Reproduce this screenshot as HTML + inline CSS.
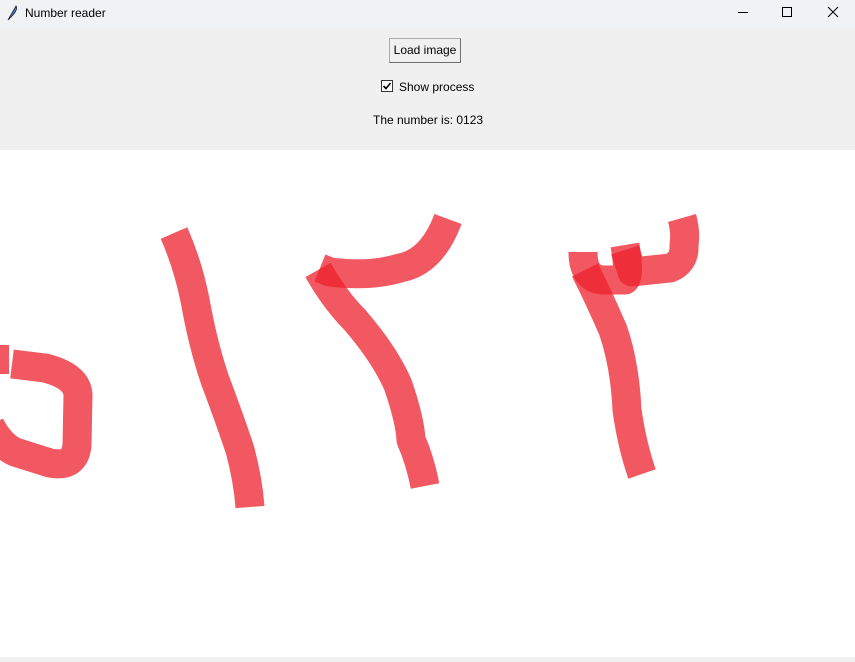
<!DOCTYPE html>
<html><head><style>
body{margin:0;width:855px;height:662px;overflow:hidden;background:#f0f0f0;font-family:"Liberation Sans",sans-serif;font-size:12px;position:relative}
.title{position:absolute;left:0;top:0;width:855px;height:28px;background:#f1f2f4}
.title span{position:absolute;left:25px;top:6px;font-size:12px;color:#000}
.btn{position:absolute;left:389px;top:38px;width:72px;height:25px;box-sizing:border-box;border:1px solid #adadad;border-right-color:#6f6f6f;border-bottom-color:#6f6f6f;background:#f0f0f0;text-align:center;line-height:23px;font-size:12px}
.chk{position:absolute;left:381px;top:80px;width:12px;height:12px;border:1px solid #333;background:#fff;box-sizing:border-box}
.lbl{position:absolute;font-size:12px;color:#000}
.canvas{position:absolute;left:0;top:150px;width:855px;height:507px;background:#fff}
</style></head><body>
<div class="title">
<svg style="position:absolute;left:6px;top:5px" width="12" height="16" viewBox="0 0 12 16"><path d="M2 15 L10 1 Q12 4 7 10 L3 14 Z" fill="#5b7fc7" stroke="#123" stroke-width="0.8"/></svg>
<span>Number reader</span>
<svg style="position:absolute;left:730px;top:6px" width="120" height="14" viewBox="0 0 120 14">
<line x1="8" y1="6.5" x2="18" y2="6.5" stroke="#000" stroke-width="1"/>
<rect x="52.5" y="1.5" width="9" height="9" fill="none" stroke="#000" stroke-width="1"/>
<path d="M98 1 L108 11 M108 1 L98 11" stroke="#000" stroke-width="1"/>
</svg>
</div>
<div class="btn">Load image</div>
<div class="chk"><svg width="10" height="10" viewBox="0 0 10 10" style="position:absolute;left:0;top:0"><path d="M1.5 5 L4 7.5 L8.5 2" fill="none" stroke="#000" stroke-width="1.6"/></svg></div>
<div class="lbl" style="left:399px;top:80px">Show process</div>
<div class="lbl" style="left:373px;top:113px">The number is: 0123</div>
<div class="canvas"></div>
<svg style="position:absolute;left:0;top:0" width="855" height="662" viewBox="0 0 855 662">
<g fill="none" stroke="rgb(236,32,44)" stroke-opacity="0.75" stroke-width="29" stroke-linejoin="round">
<path d="M0 345 L0 374" stroke-width="18"/>
<path d="M12 364 L45 368 Q77 376 78 395 L77 445 Q75 468 50 463 L15 452 Q0 445 -10 425"/>
<path d="M174 233 Q188 265 195 300 Q203 345 215 380 Q230 420 240 450 Q248 480 250 507"/>
<path d="M448 219 Q432 262 400 268 Q370 277 330 272 L320 268"/>
<path d="M318 270 Q335 300 355 320 Q385 355 398 385 Q410 420 411 440 Q420 460 425 486"/>
<path d="M583 252 Q583 280 605 280 L625 280 Q630 275 625 245"/>
<path d="M625 250 L632 272 L670 268 Q685 262 684 245 Q686 232 682 218"/>
<path d="M585 270 Q600 300 613 330 Q625 365 627 410 Q632 445 642 474"/>
</g>
</svg>
</body></html>
